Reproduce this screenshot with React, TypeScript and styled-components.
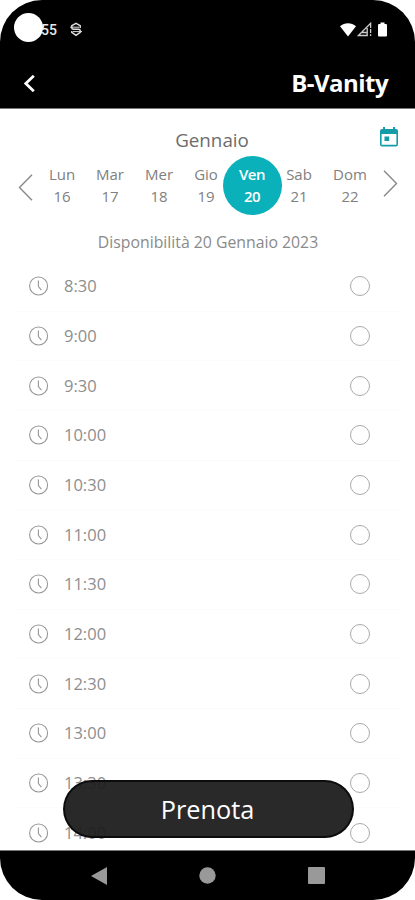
import React from 'react';
import styled, { createGlobalStyle } from 'styled-components';

const GlobalStyle = createGlobalStyle`
  * { box-sizing: border-box; }
  body { margin: 0; background: #fff; font-family: "Open Sans", "Noto Sans", sans-serif; }
  button { font: inherit; border: 0; padding: 0; background: none; }
  svg { display: block; flex: none; }
`;

const Phone = styled.div`
  width: 415px;
  height: 900px;
  display: flex;
  flex-direction: column;
  overflow: hidden;
  position: relative;
  background: #fff;
`;

const TopArea = styled.header`
  height: 109px;
  flex: none;
  background: #000;
  color: #fff;
  border-radius: 42px 42px 0 0;
  border-bottom: 1px solid #777;
`;

const StatusBar = styled.div`
  height: 58px;
  display: flex;
  align-items: center;
  padding: 0 27px 0 14px;
`;

const Camera = styled.span`
  width: 29px;
  height: 29px;
  border-radius: 50%;
  background: #fff;
  margin-top: -4px;
  z-index: 1;
`;

const Clock = styled.span`
  font: 500 14px/20px Roboto, sans-serif;
  margin-left: -2px;
  margin-right: 13px;
  margin-top: 2px;
  color: #e8e8e8;
`;

const StatusIcons = styled.span`
  display: flex;
  align-items: center;
  gap: 1px;
  margin-left: auto;
  padding-top: 1px;
`;

const TitleBar = styled.div`
  height: 50px;
  display: flex;
  align-items: center;
  justify-content: space-between;
  padding: 0 27px 0 23px;
`;

const Title = styled.h1`
  margin: 0;
  font-size: 24px;
  line-height: 32px;
  font-weight: 700;
  letter-spacing: -0.55px;
`;

const MonthBar = styled.div`
  height: 47px;
  flex: none;
  display: grid;
  grid-template-columns: 1fr 100px 1fr;
  align-items: center;
  padding: 14px 17px 0 26px;
`;

const Month = styled.div`
  grid-column: 2;
  text-align: center;
  font-size: 18.8px;
  line-height: 24px;
  color: #6c6c6c;
`;

const CalendarButton = styled.button`
  justify-self: end;
  margin-top: -5px;
`;

const WeekBar = styled.div`
  height: 59px;
  flex: none;
  display: grid;
  grid-template-columns: 38px 48px 48px 50px 44px 48px 46px 56px 37px;
  align-items: center;
`;

const Arrow = styled.button<{ $next?: boolean }>`
  display: flex;
  padding-left: ${p => (p.$next ? 5 : 18)}px;
  padding-top: ${p => (p.$next ? 0 : 4)}px;
  padding-bottom: ${p => (p.$next ? 4 : 0)}px;
`;

const Day = styled.button<{ $active?: boolean }>`
  justify-self: center;
  width: ${p => (p.$active ? 59 : 46)}px;
  height: 59px;
  margin: 0 -8px;
  border-radius: 50%;
  background: ${p => (p.$active ? '#0ab1bb' : 'transparent')};
  color: ${p => (p.$active ? '#fff' : '#808080')};
  font-size: 15px;
  font-weight: ${p => (p.$active ? 600 : 400)};
  letter-spacing: ${p => (p.$active ? -0.5 : 0)}px;
  line-height: 22px;
  display: flex;
  flex-direction: column;
  align-items: center;
  padding-top: 7px;
`;

const Availability = styled.h2`
  height: 47px;
  flex: none;
  margin: 0;
  padding: 15px 0 0 1px;
  text-align: center;
  font-size: 15.8px;
  line-height: 24px;
  font-weight: 400;
  color: #8a8a8a;
`;

const SlotList = styled.ul`
  list-style: none;
  margin: 0;
  padding: 0 15px;
  flex: 1;
  overflow: hidden;
`;

const SlotRow = styled.li`
  height: 49.66px;
  display: flex;
  align-items: center;
  padding: 0 30px 0 14px;
  border-bottom: 1px solid #fbfbfb;
`;

const SlotTime = styled.span`
  margin-left: 15px;
  font-size: 16.5px;
  line-height: 24px;
  color: #8e8e8e;
`;

const Radio = styled.span`
  width: 20px;
  height: 20px;
  margin-left: auto;
  border: 1px solid #aaa;
  border-radius: 50%;
`;

const BookButton = styled.button`
  position: absolute;
  left: 63px;
  top: 780px;
  width: 291px;
  height: 58px;
  padding-right: 2px;
  border: 2px solid rgba(0, 0, 0, 0.7);
  border-radius: 29px;
  background: rgba(29, 29, 29, 0.95);
  color: #fff;
  font-size: 25.3px;
  line-height: 32px;
`;

const NavBar = styled.nav`
  height: 50px;
  flex: none;
  display: flex;
  align-items: center;
  justify-content: space-between;
  padding: 0 90px 0 91px;
  border-top: 1px solid #777;
  border-radius: 0 0 42px 42px;
  background: #000;
`;

const ClockIcon = () => (
  <svg width="20" height="20" viewBox="0 0 20 20" fill="none" stroke="#979797" strokeWidth="1.1">
    <circle cx="9.6" cy="10" r="9" />
    <path d="M9.4 4.5v6l3 3.7" />
  </svg>
);

const days = [
  ['Lun', '16'], ['Mar', '17'], ['Mer', '18'], ['Gio', '19'],
  ['Ven', '20'], ['Sab', '21'], ['Dom', '22'],
];

const slots = [
  '8:30', '9:00', '9:30', '10:00', '10:30', '11:00',
  '11:30', '12:00', '12:30', '13:00', '13:30', '14:00',
];

export default function App() {
  return (
    <>
      <GlobalStyle />
      <Phone>
        <TopArea>
          <StatusBar>
            <Camera />
            <Clock>55</Clock>
            <svg width="12" height="15" viewBox="0 0 12 15" fill="none" stroke="#ddd" strokeWidth="1.5">
              <path d="M10.2 6V3.6L6 1.3 1.8 3.600v2.200q0 1.500 1.600 1.500h5.200q1.600 0 1.600 1.500v1.600L6 13.300 1.800 10.400V9" />
              <path d="M0 5.200h9M3 9.600h9" strokeWidth="1" />
            </svg>
            <StatusIcons>
              <svg width="16" height="14" viewBox="0 0 16 14" fill="#fff">
                <path d="M0 3.200C4.500-.8 11.500-.8 16 3.200L8 13.500z" />
              </svg>
              <svg width="15" height="15" viewBox="0 0 15 15" fill="none" stroke="#ccc" strokeWidth="1.3">
                <path d="M13.600 6V1.300L1.400 13.500h8.800V6M5 10.500h5M13.600 7v4M13.600 12.300v1.700" />
              </svg>
              <svg width="15" height="15" viewBox="0 0 15 15" fill="#fff">
                <path d="M6 2h1.500V.5h4V2H13q1 0 1 1v10.500q0 1-1 1H6q-1 0-1-1V3q0-1 1-1z" />
              </svg>
            </StatusIcons>
          </StatusBar>
          <TitleBar>
            <svg width="12" height="17" viewBox="0 0 12 17" fill="none" stroke="#fff" strokeWidth="2.8">
              <path d="M10.800.8 2.800 8.500l8 7.700" />
            </svg>
            <Title>B-Vanity</Title>
          </TitleBar>
        </TopArea>
        <MonthBar>
          <Month>Gennaio</Month>
          <CalendarButton aria-label="Calendario">
            <svg width="18" height="20" viewBox="0 0 18 20" fill="#159ca9">
              <path fillRule="evenodd" d="M2 2h1V0h2v2h8V0h2v2h1q2 0 2 2v13.500q0 2-2 2H2q-2 0-2-2V4q0-2 2-2zm-.4 5v10.800h14.800V7zM4.500 9.500h4.700v4.500H4.500z" />
            </svg>
          </CalendarButton>
        </MonthBar>
        <WeekBar>
          <Arrow aria-label="Precedente">
            <svg width="15" height="27" viewBox="0 0 15 27" fill="none" stroke="#888" strokeWidth="1.4">
              <path d="M14 .8 1.500 13.500 14 26.200" />
            </svg>
          </Arrow>
          {days.map(([name, date]) => (
            <Day key={date} $active={date === '20'}>
              <span>{name}</span>
              <span>{date}</span>
            </Day>
          ))}
          <Arrow $next aria-label="Successivo">
            <svg width="15" height="27" viewBox="0 0 15 27" fill="none" stroke="#888" strokeWidth="1.4">
              <path d="M1 .8 13.500 13.500 1 26.200" />
            </svg>
          </Arrow>
        </WeekBar>
        <Availability>Disponibilità 20 Gennaio 2023</Availability>
        <SlotList>
          {slots.map(time => (
            <SlotRow key={time}>
              <ClockIcon />
              <SlotTime>{time}</SlotTime>
              <Radio />
            </SlotRow>
          ))}
        </SlotList>
        <BookButton>Prenota</BookButton>
        <NavBar>
          <svg width="16" height="18" viewBox="0 0 16 18" fill="#999"><path d="M0 9 16 0v18z" /></svg>
          <svg width="17" height="17" viewBox="0 0 17 17" fill="#999"><circle cx="8.500" cy="8.500" r="8.200" /></svg>
          <svg width="17" height="17" viewBox="0 0 17 17" fill="#999"><rect width="17" height="17" rx="1" /></svg>
        </NavBar>
      </Phone>
    </>
  );
}
